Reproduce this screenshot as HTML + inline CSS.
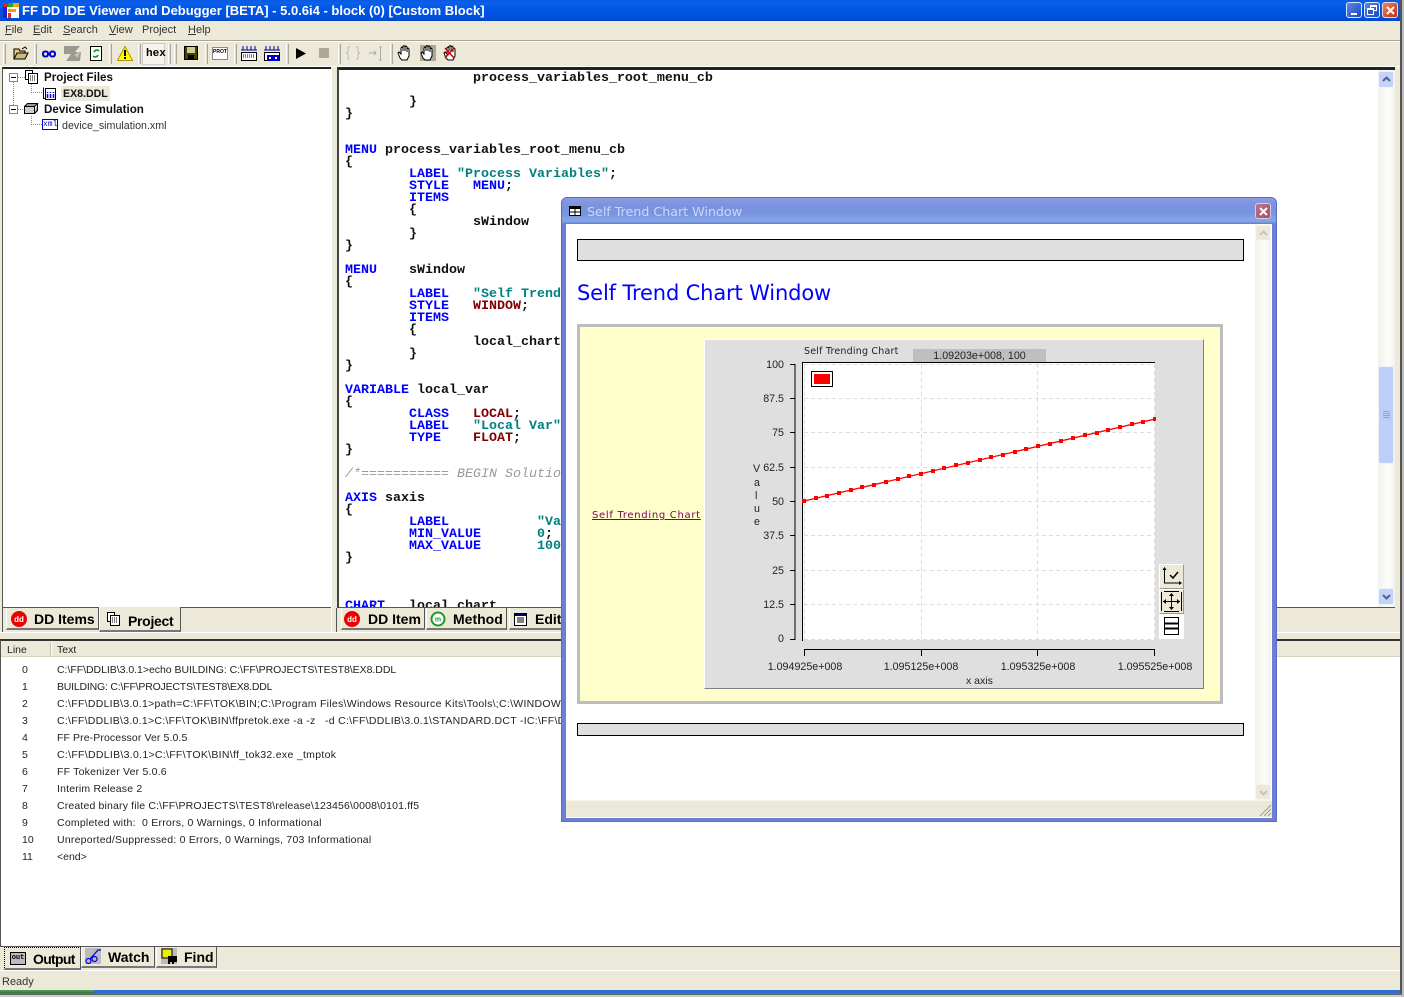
<!DOCTYPE html>
<html><head><meta charset="utf-8"><style>
html,body{margin:0;padding:0;width:1404px;height:998px;overflow:hidden;background:#fff;font-family:"Liberation Sans",sans-serif;color:#000}
div,pre,svg{position:absolute;box-sizing:border-box}
.t{white-space:nowrap;font-size:11px;line-height:14px}
.u{text-decoration:underline}
pre{margin:0;font:bold 13.33px/12px "Liberation Mono",monospace;color:#111;white-space:pre}
b.k{color:#00f}b.s{color:#008080}b.r{color:#800000}i.c{color:#999;font-weight:normal}
.tab{background:#ece9d8;border-right:1px solid #555;border-bottom:2px solid #777;border-left:1px solid #fff;font:bold 14px/22px "Liberation Sans",sans-serif;white-space:nowrap}
.sep{width:3px;height:20px;top:44px;background:#dcd9c8;border-right:1px solid #aca899;border-left:1px solid #fff}
.row{font-size:10.5px;line-height:14px;white-space:nowrap;color:#222}
.ax{font:10.7px/12px "Liberation Sans",sans-serif;white-space:nowrap;color:#222}
.ya{text-align:right;width:40px;left:744px}
.xa{text-align:center;width:100px}
.sb{background:linear-gradient(90deg,#f3f1ec,#fdfdfa 60%,#f3f1ec)}
</style></head><body>

<!-- main window -->
<div style="left:0;top:0;width:1400px;height:993px;background:#ece9d8"></div>
<div style="left:1400px;top:0;width:2px;height:995px;background:#555"></div>
<div style="left:1402px;top:0;width:2px;height:997px;background:#bbb"></div>
<div style="left:0;top:993px;width:1402px;height:2px;background:#666"></div>
<div style="left:0;top:995px;width:1402px;height:2px;background:#ccc"></div>

<!-- title bar -->
<div style="left:0;top:0;width:1400px;height:21px;background:linear-gradient(180deg,#0a5ae0 0,#0a60ee 15%,#0055e5 45%,#0050dd 85%,#0046c0 100%)"></div>
<svg style="left:3px;top:3px" width="16" height="15"><rect width="16" height="15" fill="#fff"/><rect x="0" y="0" width="5" height="4" fill="#d22"/><rect x="5" y="0" width="5" height="4" fill="#2a2"/><rect x="10" y="0" width="6" height="4" fill="#ea0"/><rect x="0" y="4" width="4" height="11" fill="#22c"/><rect x="5" y="6" width="8" height="3" fill="#f90"/><rect x="5" y="10" width="3" height="5" fill="#e22"/></svg>
<div class="t" style="left:22px;top:3px;color:#fff;font-size:13px;font-weight:bold;line-height:15px">FF DD IDE Viewer and Debugger [BETA] - 5.0.6i4 - block (0) [Custom Block]</div>
<div style="left:1346px;top:2px;width:16px;height:16px;border:1px solid #dfe8fb;border-radius:3px;background:linear-gradient(135deg,#5f86e6,#1a48c8)"><div style="left:4px;top:10px;width:6px;height:2px;background:#fff"></div></div>
<div style="left:1364px;top:2px;width:16px;height:16px;border:1px solid #dfe8fb;border-radius:3px;background:linear-gradient(135deg,#5f86e6,#1a48c8)"><div style="left:5px;top:2px;width:7px;height:6px;border:1px solid #fff;border-top-width:2px"></div><div style="left:2px;top:5px;width:7px;height:7px;border:1px solid #fff;border-top-width:2px;background:#2c58d0"></div></div>
<div style="left:1382px;top:2px;width:16px;height:16px;border:1px solid #f0d8d0;border-radius:3px;background:linear-gradient(135deg,#e8856a,#c03010)"><svg style="left:3px;top:3px" width="9" height="9"><path d="M1 1L8 8M8 1L1 8" stroke="#fff" stroke-width="2"/></svg></div>

<!-- menu -->
<div class="t" style="left:5px;top:23px;color:#333"><span class="u">F</span>ile</div>
<div class="t" style="left:33px;top:23px;color:#333"><span class="u">E</span>dit</div>
<div class="t" style="left:63px;top:23px;color:#333"><span class="u">S</span>earch</div>
<div class="t" style="left:109px;top:23px;color:#333"><span class="u">V</span>iew</div>
<div class="t" style="left:142px;top:23px;color:#333">Project</div>
<div class="t" style="left:188px;top:23px;color:#333"><span class="u">H</span>elp</div>
<div style="left:0;top:40px;width:1400px;height:1px;background:#aca899"></div>
<div style="left:0;top:41px;width:1400px;height:1px;background:#fff"></div>

<!-- toolbar -->
<div class="sep" style="left:3px"></div>
<svg style="left:13px;top:46px" width="16" height="14"><path d="M1 13V3h5l1 2h5v2" fill="#ec6" stroke="#000"/><path d="M1 13l3-6h11l-3 6z" fill="#cb8" stroke="#000"/><path d="M9 3l3-2 2 2" fill="none" stroke="#000"/></svg>
<div class="sep" style="left:34px"></div>
<svg style="left:42px;top:50px" width="14" height="8"><rect x="1" y="1.5" width="5" height="5" rx="2" fill="none" stroke="#00c" stroke-width="2"/><rect x="8" y="1.5" width="5" height="5" rx="2" fill="none" stroke="#00c" stroke-width="2"/></svg>
<svg style="left:64px;top:46px" width="17" height="15"><path d="M0 0h16l-5 6h6l-1 9H2l5-7H0z" fill="#9a9a94"/><path d="M0 8h5l-5 7zM10 9l6-4-2 7z" fill="#ece9d8" opacity=".5"/></svg>
<svg style="left:90px;top:46px" width="13" height="15"><rect x=".5" y=".5" width="11" height="14" fill="#fff" stroke="#000"/><path d="M4 6a3 3 0 015-1M8 9a3 3 0 01-5 1" fill="none" stroke="#090" stroke-width="1.6"/></svg>
<div class="sep" style="left:109px"></div>
<svg style="left:117px;top:46px" width="16" height="15"><path d="M8 .5L15.500 14.500H.5z" fill="#ff0" stroke="#a90"/><rect x="7" y="4" width="2" height="6" fill="#000"/><rect x="7" y="11" width="2" height="2" fill="#000"/></svg>
<div class="sep" style="left:138px"></div>
<div style="left:142px;top:43px;width:23px;height:22px;background:#f6f4ec;border:1px solid #ccc"></div>
<div style="left:146px;top:48px;font:bold 11px/13px 'Liberation Mono',monospace">hex</div>
<div class="sep" style="left:168px"></div><div class="sep" style="left:174px"></div>
<svg style="left:184px;top:46px" width="14" height="14"><rect x=".5" y=".5" width="13" height="13" fill="#440" stroke="#000"/><rect x="3" y="1" width="8" height="6" fill="#cc9"/><rect x="4" y="9" width="6" height="4" fill="#000"/></svg>
<div class="sep" style="left:205px"></div>
<div style="left:212px;top:47px;width:16px;height:13px;background:#fff;border:1px solid #888;font:bold 5px/8px 'Liberation Sans',sans-serif;text-align:center;color:#000">PROT</div>
<div class="sep" style="left:234px"></div>
<svg style="left:241px;top:46px" width="16" height="15"><path d="M2 0v4M6 0v4M10 0v4M14 0v4" stroke="#00a"/><path d="M0 4h16" stroke="#00a"/><rect x=".5" y="6.5" width="15" height="8" fill="#fff" stroke="#000"/><path d="M2 9h12M2 11h12" stroke="#000" stroke-dasharray="1 1"/></svg>
<svg style="left:264px;top:46px" width="16" height="16"><path d="M2 0v4M6 0v4M10 0v4M14 0v4" stroke="#00a"/><path d="M0 4h16" stroke="#00a"/><rect x=".5" y="6.5" width="15" height="8" fill="#fff" stroke="#000"/><rect x="4" y="10" width="4" height="4" fill="none" stroke="#00c" stroke-width="2"/><rect x="10" y="10" width="4" height="4" fill="none" stroke="#00c" stroke-width="2"/></svg>
<div class="sep" style="left:286px"></div>
<svg style="left:296px;top:48px" width="10" height="11"><path d="M0 0L10 5.5L0 11z" fill="#000"/></svg>
<div style="left:319px;top:48px;width:10px;height:10px;background:#aca899"></div>
<div class="sep" style="left:338px"></div>
<svg style="left:346px;top:46px" width="14" height="15"><path d="M4 1H2v5L0 7l2 1v5h2M10 1h2v5l2 1-2 1v5h-2" fill="none" stroke="#bbb"/></svg>
<svg style="left:369px;top:46px" width="14" height="15"><path d="M0 7h7M5 5l2 2-2 2M10 1h3M10 14h3M11.500 1v13" fill="none" stroke="#aaa"/></svg>
<div class="sep" style="left:390px"></div>
<svg style="left:397px;top:45px" width="15" height="16"><path d="M3 13L1 8l1-1 2 2V3l1-1 1 1v3V1.500l1-1 1 1V6V2l1-1 1 1v5V4l1-1 1 1v7l-2 4H5z" fill="#fff" stroke="#000"/></svg>
<div style="left:420px;top:45px;width:16px;height:16px;background:#aca899"></div>
<svg style="left:420px;top:45px" width="15" height="16"><path d="M3 13L1 8l1-1 2 2V3l1-1 1 1v3V1.500l1-1 1 1V6V2l1-1 1 1v5V4l1-1 1 1v7l-2 4H5z" fill="#fff" stroke="#000"/></svg>
<svg style="left:443px;top:45px" width="15" height="16"><path d="M3 13L1 8l1-1 2 2V3l1-1 1 1v3V1.500l1-1 1 1V6V2l1-1 1 1v5V4l1-1 1 1v7l-2 4H5z" fill="#fff" stroke="#000"/><path d="M2 3l9 10M11 3L2 13" stroke="#d00" stroke-width="1.500"/></svg>
<div style="left:0;top:66px;width:1400px;height:1px;background:#fff"></div>

<!-- left pane -->
<div style="left:2px;top:67px;width:329px;height:541px;background:#fff;border-top:2px solid #222;border-left:1px solid #555"></div>
<svg style="left:5px;top:70px" width="60" height="60"><path d="M8.500 12v23M13 7.500h7M26.500 14v8.500h11M13 39.500h6M26.500 46v8.500h11" stroke="#888" stroke-dasharray="1 1" fill="none"/></svg>
<div style="left:9px;top:73px;width:9px;height:9px;border:1px solid #888;background:#fff"><div style="left:1px;top:3px;width:5px;height:1px;background:#000"></div></div>
<div style="left:9px;top:105px;width:9px;height:9px;border:1px solid #888;background:#fff"><div style="left:1px;top:3px;width:5px;height:1px;background:#000"></div></div>
<svg style="left:25px;top:70px" width="13" height="14"><rect x=".5" y=".5" width="7" height="9" fill="#fff" stroke="#000"/><rect x="3.500" y="3.500" width="9" height="10" fill="#fff" stroke="#000"/><path d="M5 6h6M5 8h6M5 10h6" stroke="#000" stroke-dasharray="1 1"/></svg>
<div class="t" style="left:44px;top:71px;font-weight:bold;font-size:11.600px;color:#111">Project Files</div>
<svg style="left:43px;top:86px" width="13" height="14"><path d="M2.500 2.500h10v11h-10z" fill="#fff" stroke="#000"/><path d="M.5 1.500v11h2" fill="none" stroke="#000"/><path d="M4.500 12V6M7.500 12V6M10.500 12V6" stroke="#00f" stroke-width="1.500" stroke-dasharray="4 1"/></svg>
<div style="left:61px;top:86px;width:49px;height:15px;background:#ece9d8"></div>
<div class="t" style="left:63px;top:87px;font-weight:bold;font-size:10.600px;color:#111">EX8.DDL</div>
<svg style="left:24px;top:103px" width="15" height="11"><path d="M.5 3.500h10v7H.5z" fill="#ccc" stroke="#000"/><path d="M.5 3.500l3-3h10l-3 3zM10.500 10.500l3-3v-7" fill="#999" stroke="#000"/></svg>
<div class="t" style="left:44px;top:103px;font-weight:bold;font-size:11.600px;color:#111">Device Simulation</div>
<div style="left:42px;top:119px;width:16px;height:11px;border:1px solid #00c;font:8px/9px 'Liberation Mono',monospace;color:#00c;text-align:center">xml</div>
<div class="t" style="left:62px;top:119px;font-size:10.700px;color:#333">device_simulation.xml</div>

<!-- left tabs -->
<div style="left:2px;top:607px;width:329px;height:1px;background:#555"></div>
<div style="left:2px;top:608px;width:1px;height:25px;background:#555"></div>
<div class="tab" style="left:6px;top:608px;width:93px;height:22px;padding-left:27px">DD Items</div>
<svg style="left:11px;top:611px" width="16" height="16"><circle cx="8" cy="8" r="8" fill="#e00"/><text x="8" y="11" font-size="8" font-weight="bold" fill="#fff" text-anchor="middle" font-family="Liberation Sans">dd</text></svg>
<div class="tab" style="left:99px;top:607px;width:82px;height:25px;padding:3px 0 0 28px;z-index:2;letter-spacing:-.3px">Project</div>
<svg style="left:107px;top:612px;z-index:3" width="13" height="14"><rect x=".5" y=".5" width="7" height="9" fill="#fff" stroke="#000"/><rect x="3.500" y="3.500" width="9" height="10" fill="#fff" stroke="#000"/><path d="M5 6h6M5 8h6M5 10h6" stroke="#000" stroke-dasharray="1 1"/></svg>

<!-- code pane -->
<div style="left:337px;top:67px;width:1058px;height:541px;background:#fff;border-top:3px solid #222;border-left:2px solid #444"></div>
<div style="left:331px;top:69px;width:6px;height:563px;background:#ece9d8;border-left:1px solid #fff"></div>
<div style="left:336px;top:608px;width:1px;height:25px;background:#555"></div>
<div class="sb" style="left:1378px;top:70px;width:17px;height:537px"></div>
<div style="left:1378px;top:71px;width:16px;height:17px;background:#c3d4fb;border:1px solid #eef2fd;border-radius:2px"><svg style="left:3px;top:4px" width="9" height="7"><path d="M1 5l3.500-3.500L8 5" fill="none" stroke="#4d6185" stroke-width="2"/></svg></div>
<div style="left:1378px;top:366px;width:16px;height:98px;background:#bccffa;border:1px solid #eef2fd;border-radius:2px"><svg style="left:3px;top:44px" width="9" height="8"><path d="M1 .5h7M1 2.500h7M1 4.500h7M1 6.500h7" stroke="#8aa3e0"/></svg></div>
<div style="left:1378px;top:588px;width:16px;height:17px;background:#c3d4fb;border:1px solid #eef2fd;border-radius:2px"><svg style="left:3px;top:4px" width="9" height="7"><path d="M1 2l3.500 3.500L8 2" fill="none" stroke="#4d6185" stroke-width="2"/></svg></div>

<div style="left:339px;top:71px;width:1039px;height:536px;overflow:hidden">
<pre style="left:6px;top:2px"><!---->                process_variables_root_menu_cb

        }
}


<b class="k">MENU</b> process_variables_root_menu_cb
{
        <b class="k">LABEL</b> <b class="s">"Process Variables"</b>;
        <b class="k">STYLE</b>   <b class="k">MENU</b>;
        <b class="k">ITEMS</b>
        {
                sWindow
        }
}

<b class="k">MENU</b>    sWindow
{
        <b class="k">LABEL</b>   <b class="s">"Self Trend</b>
        <b class="k">STYLE</b>   <b class="r">WINDOW</b>;
        <b class="k">ITEMS</b>
        {
                local_chart
        }
}

<b class="k">VARIABLE</b> local_var
{
        <b class="k">CLASS</b>   <b class="r">LOCAL</b>;
        <b class="k">LABEL</b>   <b class="s">"Local Var"</b>
        <b class="k">TYPE</b>    <b class="r">FLOAT</b>;
}

<i class="c">/*=========== BEGIN Solutio</i>

<b class="k">AXIS</b> saxis
{
        <b class="k">LABEL</b>           <b class="s">"Va</b>
        <b class="k">MIN_VALUE</b>       <b class="s">0</b>;
        <b class="k">MAX_VALUE</b>       <b class="s">100</b>
}



<b class="k">CHART</b>   local_chart</pre>
</div>

<!-- code tabs -->
<div style="left:339px;top:607px;width:1056px;height:1px;background:#555"></div>
<div class="tab" style="left:341px;top:608px;width:84px;height:22px;padding-left:26px">DD Item</div>
<svg style="left:344px;top:611px" width="16" height="16"><circle cx="8" cy="8" r="8" fill="#e00"/><text x="8" y="11" font-size="8" font-weight="bold" fill="#fff" text-anchor="middle" font-family="Liberation Sans">dd</text></svg>
<div class="tab" style="left:426px;top:608px;width:81px;height:22px;padding-left:26px">Method</div>
<svg style="left:430px;top:611px" width="16" height="16"><circle cx="8" cy="8" r="6.500" fill="#fff" stroke="#1a9a2a" stroke-width="2"/><text x="8" y="10.500" font-size="7" font-weight="bold" fill="#1a9a2a" text-anchor="middle" font-family="Liberation Sans">m</text></svg>
<div class="tab" style="left:509px;top:608px;width:70px;height:22px;padding-left:25px">Edit</div>
<svg style="left:514px;top:613px" width="13" height="13"><rect x=".5" y=".5" width="12" height="12" fill="#fff" stroke="#000"/><rect x="1" y="1" width="11" height="2" fill="#006"/><path d="M3 5h7M3 7h7M3 9h7" stroke="#000"/></svg>

<!-- output pane -->
<div style="left:0;top:632px;width:1400px;height:1px;background:#fff"></div>
<div style="left:0;top:639px;width:1400px;height:307px;background:#fff;border-top:2px solid #333;border-left:1px solid #555"></div>
<div style="left:1px;top:641px;width:1399px;height:16px;background:#ece9d8;border-bottom:1px solid #d8d4c0"></div>
<div style="left:50px;top:642px;width:2px;height:14px;background:#c5c2b2;border-right:1px solid #fff"></div>
<div class="row" style="left:7px;top:643px">Line</div>
<div class="row" style="left:57px;top:643px">Text</div>

<div class="row" style="left:22px;top:663px">0</div><div class="row" style="left:57px;top:663px;letter-spacing:-.03px">C:\FF\DDLIB\3.0.1&gt;echo BUILDING: C:\FF\PROJECTS\TEST8\EX8.DDL</div>
<div class="row" style="left:22px;top:680px">1</div><div class="row" style="left:57px;top:680px;letter-spacing:-.2px">BUILDING: C:\FF\PROJECTS\TEST8\EX8.DDL</div>
<div class="row" style="left:22px;top:697px">2</div><div class="row" style="left:57px;top:697px;letter-spacing:.28px">C:\FF\DDLIB\3.0.1&gt;path=C:\FF\TOK\BIN;C:\Program Files\Windows Resource Kits\Tools\;C:\WINDOWS\system32</div>
<div class="row" style="left:22px;top:714px">3</div><div class="row" style="left:57px;top:714px;letter-spacing:.27px">C:\FF\DDLIB\3.0.1&gt;C:\FF\TOK\BIN\ffpretok.exe -a -z&nbsp;&nbsp; -d C:\FF\DDLIB\3.0.1\STANDARD.DCT -IC:\FF\DDLIB</div>
<div class="row" style="left:22px;top:731px">4</div><div class="row" style="left:57px;top:731px;letter-spacing:.1px">FF Pre-Processor Ver 5.0.5</div>
<div class="row" style="left:22px;top:748px">5</div><div class="row" style="left:57px;top:748px;letter-spacing:.3px">C:\FF\DDLIB\3.0.1&gt;C:\FF\TOK\BIN\ff_tok32.exe _tmptok</div>
<div class="row" style="left:22px;top:765px">6</div><div class="row" style="left:57px;top:765px;letter-spacing:.2px">FF Tokenizer Ver 5.0.6</div>
<div class="row" style="left:22px;top:782px">7</div><div class="row" style="left:57px;top:782px;letter-spacing:.18px">Interim Release 2</div>
<div class="row" style="left:22px;top:799px">8</div><div class="row" style="left:57px;top:799px;letter-spacing:.16px">Created binary file C:\FF\PROJECTS\TEST8\release\123456\0008\0101.ff5</div>
<div class="row" style="left:22px;top:816px">9</div><div class="row" style="left:57px;top:816px;letter-spacing:.23px">Completed with:&nbsp; 0 Errors, 0 Warnings, 0 Informational</div>
<div class="row" style="left:22px;top:833px">10</div><div class="row" style="left:57px;top:833px;letter-spacing:.23px">Unreported/Suppressed: 0 Errors, 0 Warnings, 703 Informational</div>
<div class="row" style="left:22px;top:850px">11</div><div class="row" style="left:57px;top:850px">&lt;end&gt;</div>

<!-- bottom tabs -->
<div style="left:0;top:946px;width:1400px;height:1px;background:#555"></div>
<div class="tab" style="left:4px;top:947px;width:77px;height:23px;padding:0 0 0 28px;z-index:2;border-left:1px dotted #000;border-top:1px dotted #000;letter-spacing:-.7px">Output</div>
<div style="left:10px;top:952px;width:16px;height:13px;background:#bbb;border:1px solid #000;font:bold 7px/11px 'Liberation Mono',monospace;text-align:center;z-index:3">out</div>
<div class="tab" style="left:81px;top:947px;width:74px;height:21px;padding-left:26px;line-height:20px">Watch</div>
<svg style="left:85px;top:948px" width="17" height="16"><rect width="16" height="16" fill="#bbb"/><path d="M1 13a2.500 2.500 0 105 0a2.500 2.500 0 10-5 0M7 11a2.500 2.500 0 105 0a2.500 2.500 0 10-5 0M5 11l8-9 3 0" fill="none" stroke="#00d" stroke-width="1.200"/></svg>
<div class="tab" style="left:156px;top:947px;width:61px;height:21px;padding-left:27px;line-height:20px">Find</div>
<svg style="left:161px;top:948px" width="17" height="16"><rect width="16" height="16" fill="#bbb"/><path d="M1 1h10v9H1z" fill="#ee0" stroke="#000"/><path d="M7 8h9v6h-3v2h-2v-2H9v2H7z" fill="#000"/></svg>
<div style="left:0;top:970px;width:1400px;height:1px;background:#fff"></div>
<div class="t" style="left:2px;top:975px;font-size:11px;color:#333">Ready</div>
<div style="left:0;top:990px;width:94px;height:3px;background:linear-gradient(180deg,#5aa05a,#2f7a38)"></div>
<div style="left:94px;top:990px;width:1306px;height:3px;background:#2f6fd8"></div>

<!-- popup window -->
<div style="left:561px;top:197px;width:716px;height:625px;background:#6b7fd6;border-radius:6px 6px 0 0;border:1px solid #5a6cc8;z-index:10">
  <div style="left:0;top:0;width:714px;height:25px;border-radius:5px 5px 0 0;background:linear-gradient(180deg,#8a9ce4 0,#7c93de 30%,#7893e0 60%,#84a8ec 90%,#7a8fd8 100%)"></div>
  <svg style="left:7px;top:8px" width="12" height="10"><rect width="12" height="10" fill="#000"/><rect x="1" y="3" width="10" height="6" fill="#fff"/><path d="M1 6h10M6 3v6" stroke="#000"/></svg>
  <div class="t" style="left:25px;top:7px;color:#cdd6f4;font-size:12.800px;line-height:15px;font-family:'DejaVu Sans',sans-serif;letter-spacing:-.08px">Self Trend Chart Window</div>
  <div style="left:693px;top:5px;width:16px;height:16px;background:linear-gradient(135deg,#b8768a,#a44e68);border:1px solid #d8d0e4;border-radius:3px"><svg style="left:3px;top:3px" width="9" height="9"><path d="M1 1L8 8M8 1L1 8" stroke="#fff" stroke-width="2"/></svg></div>
  <div style="left:4px;top:25px;width:706px;height:595px;background:#fff;border-top:1px solid #8a8468"></div>
</div>
<div style="left:566px;top:224px;width:706px;height:593px;z-index:11">
  <div class="sb" style="left:689px;top:0;width:16px;height:576px"></div>
  <div style="left:689px;top:1px;width:16px;height:16px;background:#ece9d8;border:1px solid #f6f5ee;border-radius:2px"><svg style="left:3px;top:4px" width="9" height="7"><path d="M1 5l3.500-3.500L8 5" fill="none" stroke="#c5c3b5" stroke-width="2"/></svg></div>
  <div style="left:689px;top:560px;width:16px;height:16px;background:#ece9d8;border:1px solid #f6f5ee;border-radius:2px"><svg style="left:3px;top:4px" width="9" height="7"><path d="M1 2l3.500 3.500L8 2" fill="none" stroke="#c5c3b5" stroke-width="2"/></svg></div>
  <div style="left:0;top:576px;width:706px;height:17px;background:#ece9d8;border-top:1px solid #f6f5ee"></div>
  <svg style="left:693px;top:580px" width="13" height="13"><path d="M12 1L1 12M12 5L5 12M12 9L9 12" stroke="#a09c8c"/></svg>

  <div style="left:11px;top:15px;width:667px;height:22px;background:#dfdfdf;border:1px solid #000"></div>
  <div class="t" style="left:11px;top:55px;font:21px/28px 'DejaVu Sans',sans-serif;color:#00f;letter-spacing:-.15px">Self Trend Chart Window</div>

  <div style="left:11px;top:100px;width:646px;height:380px;background:#ffc;border:3px solid #bdbdbd"></div>
  <div class="t" style="left:26px;top:285px;font:10px/14px 'DejaVu Sans',sans-serif;color:#800060;text-decoration:underline;letter-spacing:.7px">Self Trending Chart</div>
  <div style="left:138px;top:115px;width:500px;height:350px;background:#dfdfdf;border-right:1px solid #808080;border-bottom:1px solid #808080;border-top:1px solid #fff;border-left:1px solid #fff"></div>
  <div style="left:11px;top:499px;width:667px;height:13px;background:#dfdfdf;border:1px solid #000"></div>
</div>

<!-- chart -->
<svg style="left:0;top:0;z-index:12" width="1404" height="998">
  <rect x="803" y="363" width="352" height="277" fill="#fff"/>
  <path d="M804 364.500h351M804 398.500h351M804 432.500h351M804 467.500h351M804 501.500h351M804 535.500h351M804 570.500h351M804 604.500h351M804 639.500h351M804.500 364v276M921.500 364v276M1037.500 364v276M1154.500 364v276" stroke="#ddd" stroke-dasharray="4 3" fill="none"/>
  <path d="M802.500 362.500H1155" stroke="#000" fill="none"/>
  <path d="M802.500 362v279" stroke="#000" stroke-width="1" fill="none"/>
  <path d="M795 364V640M790 364.500h5M790 398.500h5M790 432.500h5M790 467.500h5M790 501.500h5M790 535.500h5M790 570.500h5M790 604.500h5M790 639.500h5" stroke="#000" fill="none"/>
  <path d="M804.500 649.500H1154.500M804.500 649v7M921.500 649v7M1037.500 649v7M1154.500 649v7" stroke="#000" fill="none"/>
  <path d="M804 501L1155 419" stroke="#f00" stroke-width="1.300" fill="none"/>
  <path fill="#f00" d="M802 499h4v4h-4zM814 496h4v4h-4zM825 494h4v4h-4zM837 491h4v4h-4zM849 488h4v4h-4zM860 485h4v4h-4zM872 483h4v4h-4zM884 480h4v4h-4zM896 477h4v4h-4zM907 474h4v4h-4zM919 472h4v4h-4zM931 469h4v4h-4zM942 466h4v4h-4zM954 463h4v4h-4zM966 461h4v4h-4zM978 458h4v4h-4zM989 455h4v4h-4zM1001 453h4v4h-4zM1013 450h4v4h-4zM1024 447h4v4h-4zM1036 444h4v4h-4zM1048 442h4v4h-4zM1059 439h4v4h-4zM1071 436h4v4h-4zM1083 433h4v4h-4zM1095 431h4v4h-4zM1106 428h4v4h-4zM1118 425h4v4h-4zM1130 422h4v4h-4zM1141 420h4v4h-4zM1153 417h3v4h-3z"/>
  <rect x="811.500" y="371.500" width="21" height="15" fill="#fff" stroke="#000"/>
  <rect x="814" y="374" width="16" height="10" fill="#f00"/>
  <rect x="913" y="349" width="133" height="13" fill="#bfbfbf"/>
</svg>
<div style="left:0;top:0;z-index:13;width:1404px;height:998px">
  <div class="ax" style="left:804px;top:346px;font:9.500px/12px 'DejaVu Sans',sans-serif;letter-spacing:.2px">Self Trending Chart</div>
  <div class="ax" style="left:913px;top:350px;width:133px;text-align:center">1.09203e+008, 100</div>
  <div class="ax ya" style="top:359px">100</div>
  <div class="ax ya" style="top:393px">87.5</div>
  <div class="ax ya" style="top:427px">75</div>
  <div class="ax ya" style="top:462px">62.5</div>
  <div class="ax ya" style="top:496px">50</div>
  <div class="ax ya" style="top:530px">37.5</div>
  <div class="ax ya" style="top:565px">25</div>
  <div class="ax ya" style="top:599px">12.5</div>
  <div class="ax ya" style="top:633px">0</div>
  <div class="ax" style="left:753px;top:463px">V</div>
  <div class="ax" style="left:754px;top:477px">a</div>
  <div class="ax" style="left:755px;top:490px">l</div>
  <div class="ax" style="left:754px;top:503px">u</div>
  <div class="ax" style="left:754px;top:516px">e</div>
  <div class="ax xa" style="left:755px;top:661px">1.094925e+008</div>
  <div class="ax xa" style="left:871px;top:661px">1.095125e+008</div>
  <div class="ax xa" style="left:988px;top:661px">1.095325e+008</div>
  <div class="ax xa" style="left:1105px;top:661px">1.095525e+008</div>
  <div class="ax" style="left:966px;top:675px;font-size:10.500px">x axis</div>

  <div style="left:1159px;top:564px;width:25px;height:25px;background:#ece9d8;border-top:1px solid #fff;border-left:1px solid #fff;border-right:1px solid #999;border-bottom:1px solid #999"></div>
  <svg style="left:1161px;top:566px" width="22" height="21"><path d="M3.500 2v15h16" fill="none" stroke="#000"/><path d="M3.500 1l-2 3h4zM21 17l-3-2v4z" fill="#000"/><path d="M9 9l3 3 5-6" fill="none" stroke="#000" stroke-width="1.500"/></svg>
  <div style="left:1159px;top:589px;width:25px;height:25px;background:#ece9d8;border-top:1px solid #fff;border-left:1px solid #fff;border-right:1px solid #999;border-bottom:1px solid #999"></div>
  <svg style="left:1160px;top:590px" width="23" height="23"><path d="M1.500 2v19M21.500 2v19M4 1.500h15M4 21.500h15" stroke="#000" fill="none"/><path d="M11.500 4v15M3 11.500h17" stroke="#000"/><path d="M11.500 3l-2.500 3h5zM11.500 20l-2.500-3h5zM3 11.500l3-2.500v5zM20 11.500l-3-2.500v5z" fill="#000"/></svg>
  <div style="left:1159px;top:614px;width:25px;height:25px;background:#fff"></div>
  <svg style="left:1164px;top:617px" width="15" height="19"><rect x=".5" y=".5" width="14" height="17" fill="#fff" stroke="#000"/><path d="M0 6.500h15M0 11.500h15" stroke="#000" stroke-width="2"/></svg>
</div>
</body></html>
